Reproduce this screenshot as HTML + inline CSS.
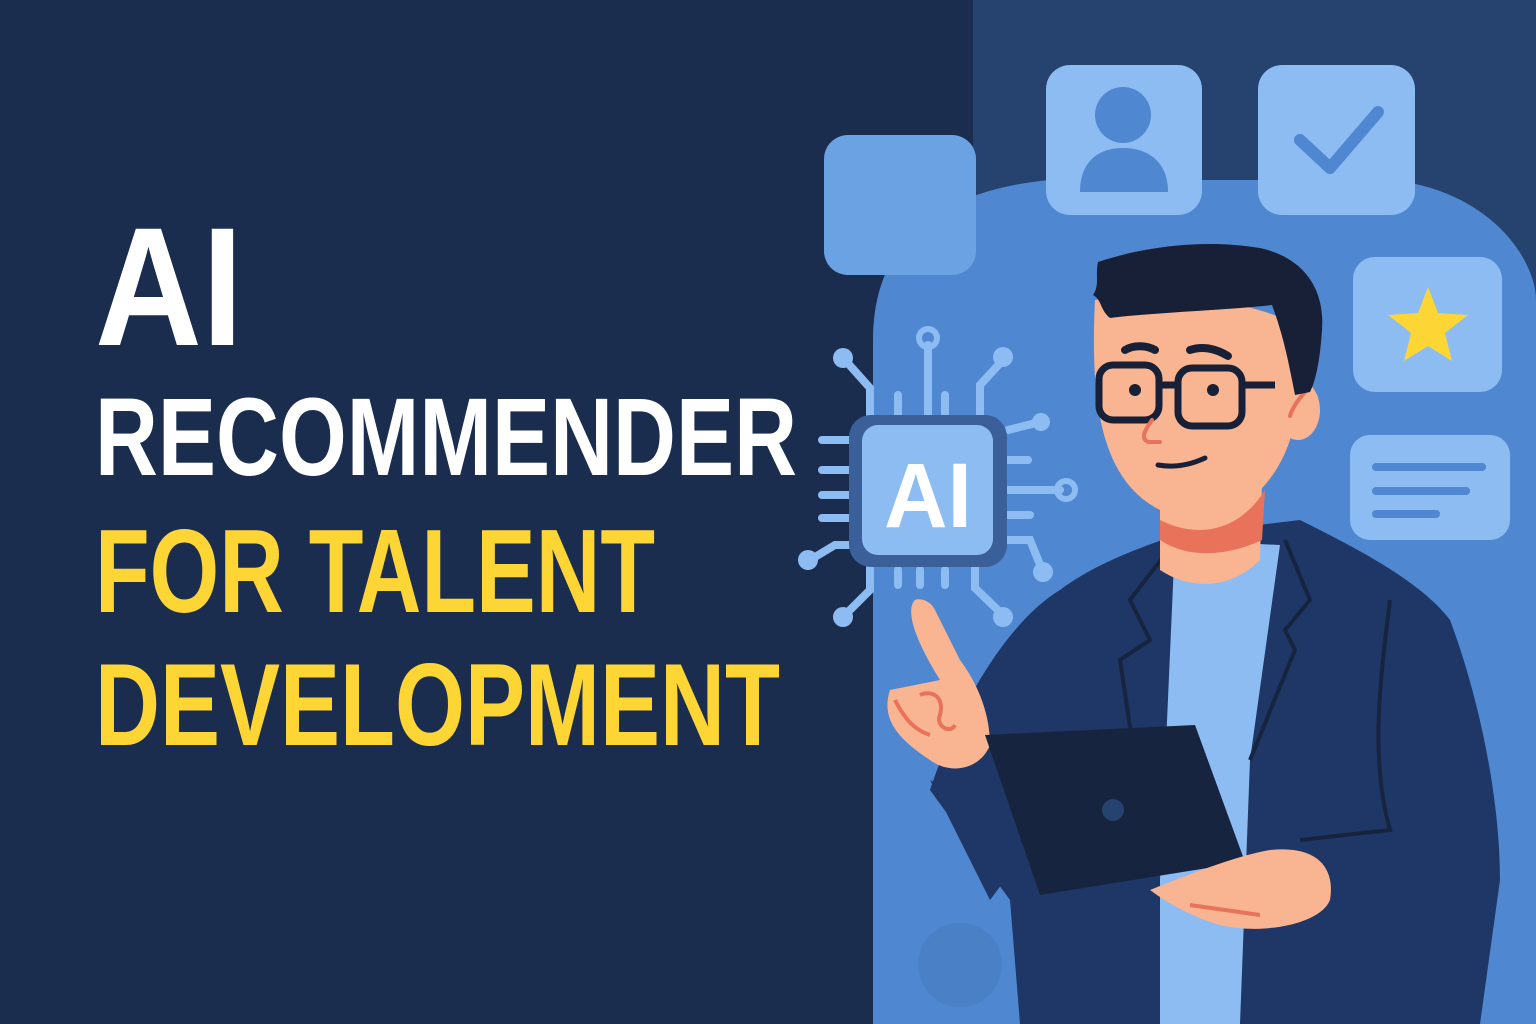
<!DOCTYPE html>
<html><head><meta charset="utf-8"><style>
html,body{margin:0;padding:0;width:1536px;height:1024px;overflow:hidden;background:#1b2d4f}
svg{display:block}
</style></head><body>
<svg width="1536" height="1024" viewBox="0 0 1536 1024" xmlns="http://www.w3.org/2000/svg">
<rect width="1536" height="1024" fill="#1b2d4f"/>
<rect x="973" y="0" width="563" height="1024" fill="#26426f"/>
<path d="M873,1024 L873,340 C873,240 940,190 1050,180 L1390,180 C1490,190 1536,260 1536,300 L1536,1024 Z" fill="#4f87d0"/>
<circle cx="960" cy="965" r="42" fill="#4a80c6"/>
<rect x="824" y="135" width="152" height="140" rx="24" fill="#6aa2e4"/>
<rect x="1046" y="65" width="156" height="150" rx="24" fill="#8cbcf2"/>
<circle cx="1123" cy="115" r="28" fill="#4f87d0"/>
<path d="M1080,192 C1080,160 1100,148 1123,148 C1146,148 1168,160 1168,192 Z" fill="#4f87d0"/>
<rect x="1258" y="65" width="157" height="150" rx="24" fill="#8cbcf2"/>
<path d="M1300,140 L1330,168 L1378,112" stroke="#4f87d0" stroke-width="12" fill="none" stroke-linecap="round" stroke-linejoin="round"/>
<rect x="1353" y="257" width="149" height="135" rx="22" fill="#8cbcf2"/>
<polygon points="1428,287 1438,313 1468,315 1445,333 1452,361 1428,346 1404,361 1411,333 1388,315 1418,313" fill="#fdd535"/>
<rect x="1350" y="435" width="160" height="105" rx="20" fill="#8cbcf2"/>
<g stroke="#4f87d0" stroke-width="8" stroke-linecap="round"><line x1="1376" y1="467" x2="1482" y2="467"/><line x1="1376" y1="491" x2="1466" y2="491"/><line x1="1376" y1="514" x2="1436" y2="514"/></g>
<g stroke="#8cbcf2" stroke-width="8" stroke-linecap="round" fill="none">
<path d="M845,360 L870,388 L870,420"/><path d="M928,345 L928,415"/><path d="M1003,360 L980,385 L980,415"/>
<path d="M898,395 L898,415"/><path d="M945,395 L945,415"/>
<path d="M822,440 L850,440"/><path d="M822,470 L850,470"/><path d="M822,495 L850,495"/><path d="M822,518 L850,518"/>
<path d="M810,560 L835,545 L850,545"/><path d="M845,615 L870,590 L870,567"/>
<path d="M898,570 L898,585"/><path d="M920,570 L920,585"/><path d="M945,570 L945,585"/><path d="M1003,615 L975,588 L975,567"/>
<path d="M1008,460 L1028,460"/><path d="M1008,490 L1060,490"/><path d="M1008,515 L1030,515"/><path d="M1008,430 L1040,422"/><path d="M1008,540 L1030,540 L1043,572"/>
</g>
<g fill="#8cbcf2"><circle cx="843" cy="358" r="10"/><circle cx="1003" cy="357" r="10"/><circle cx="808" cy="560" r="10"/><circle cx="843" cy="617" r="10"/><circle cx="1003" cy="617" r="10"/><circle cx="1043" cy="572" r="10"/><circle cx="1041" cy="422" r="9"/></g>
<circle cx="928" cy="338" r="9" fill="none" stroke="#8cbcf2" stroke-width="6"/>
<circle cx="1066" cy="490" r="9" fill="none" stroke="#8cbcf2" stroke-width="6"/>
<rect x="849" y="415" width="158" height="152" rx="22" fill="#3a5f99"/>
<rect x="862" y="425" width="131" height="130" rx="16" fill="#8cbcf2"/>
<text x="928" y="527" text-anchor="middle" font-family="Liberation Sans, sans-serif" font-weight="bold" font-size="92" fill="#fff" textLength="88" lengthAdjust="spacingAndGlyphs">AI</text>
<path d="M1060,590 C1100,560 1150,545 1175,535 L1300,520 C1350,545 1420,580 1450,620 C1480,700 1500,800 1500,880 L1480,1024 L1020,1024 L1010,900 L930,790 C960,700 1010,620 1060,590 Z" fill="#1e3766"/>
<path d="M1175,540 L1280,545 L1250,760 L1240,1024 L1160,1024 L1160,880 Z" fill="#8cbcf2"/>
<path d="M1180,535 L1130,600 L1150,640 L1120,660 L1135,760" stroke="#172440" stroke-width="4" fill="none"/>
<path d="M1285,540 L1310,600 L1285,630 L1295,650 L1250,760" stroke="#172440" stroke-width="4" fill="none"/>
<path d="M1390,600 C1380,680 1370,760 1390,830 L1300,840" stroke="#172440" stroke-width="4" fill="none"/>
<path d="M1160,480 L1160,570 C1190,590 1230,590 1260,560 L1262,480 Z" fill="#f9b491"/>
<path d="M1160,520 C1200,540 1240,530 1265,490 L1262,540 C1230,555 1190,560 1160,540 Z" fill="#e8735a"/>
<path d="M1095,300 C1090,400 1100,480 1160,510 C1220,530 1270,500 1290,440 L1300,330 C1270,300 1150,290 1095,300 Z" fill="#f9b491"/>
<ellipse cx="1298" cy="410" rx="22" ry="30" fill="#f9b491"/>
<path d="M1305,392 C1298,400 1292,408 1290,416" stroke="#e8735a" stroke-width="4" fill="none" stroke-linecap="round"/>
<path d="M1098,262 C1140,248 1200,238 1260,248 C1305,258 1325,290 1322,330 C1320,360 1316,380 1310,392 L1295,395 C1290,370 1285,340 1272,305 C1230,310 1160,312 1110,318 C1100,310 1102,300 1093,295 C1100,285 1095,275 1098,262 Z" fill="#172036"/>
<g fill="none" stroke="#172036" stroke-width="7">
<rect x="1099" y="365" width="60" height="55" rx="14"/><rect x="1178" y="368" width="64" height="58" rx="14"/>
<path d="M1159,385 L1178,385"/><path d="M1242,385 L1275,385"/>
</g>
<circle cx="1135" cy="390" r="6" fill="#172036"/><circle cx="1213" cy="390" r="6" fill="#172036"/>
<path d="M1125,350 C1135,344 1148,346 1155,350" stroke="#172036" stroke-width="8" fill="none" stroke-linecap="round"/>
<path d="M1190,350 C1205,345 1218,350 1228,356" stroke="#172036" stroke-width="8" fill="none" stroke-linecap="round"/>
<path d="M1152,420 C1145,430 1140,438 1148,442 L1160,442" stroke="#e8735a" stroke-width="4" fill="none" stroke-linecap="round"/>
<path d="M1158,465 C1175,468 1190,465 1205,458" stroke="#172036" stroke-width="5" fill="none" stroke-linecap="round"/>
<path d="M930,780 C960,800 990,780 990,760 L1020,860 L990,900 Z" fill="#1e3766"/>
<path d="M915,600 C905,610 915,640 940,680 L890,690 C880,720 900,740 930,760 C950,775 980,770 990,745 C990,710 975,680 960,660 L935,610 C930,600 920,598 915,600 Z" fill="#f9b491"/>
<path d="M895,700 C905,720 915,730 930,735 M920,695 C930,690 945,695 940,715 C935,725 950,735 955,725" stroke="#e8735a" stroke-width="4" fill="none"/>
<path d="M985,735 L1195,725 L1245,862 L1040,895 Z" fill="#172440"/>
<circle cx="1113" cy="810" r="11" fill="#26426f"/>
<path d="M1150,890 C1200,870 1240,855 1270,850 C1320,845 1335,870 1330,900 C1320,925 1260,935 1220,925 C1195,918 1170,905 1150,890 Z" fill="#f9b491"/>
<path d="M1190,905 L1260,915" stroke="#e8735a" stroke-width="4"/>
<g font-family="Liberation Sans, sans-serif" font-weight="bold">
<text x="95" y="345" font-size="169" fill="#fff" textLength="148" lengthAdjust="spacingAndGlyphs">AI</text>
<text x="95" y="475" font-size="110" fill="#fff" textLength="702" lengthAdjust="spacingAndGlyphs">RECOMMENDER</text>
<text x="95" y="612" font-size="119" fill="#fdd535" textLength="560" lengthAdjust="spacingAndGlyphs">FOR TALENT</text>
<text x="95" y="745" font-size="117" fill="#fdd535" textLength="685" lengthAdjust="spacingAndGlyphs">DEVELOPMENT</text>
</g>
</svg>
</body></html>
